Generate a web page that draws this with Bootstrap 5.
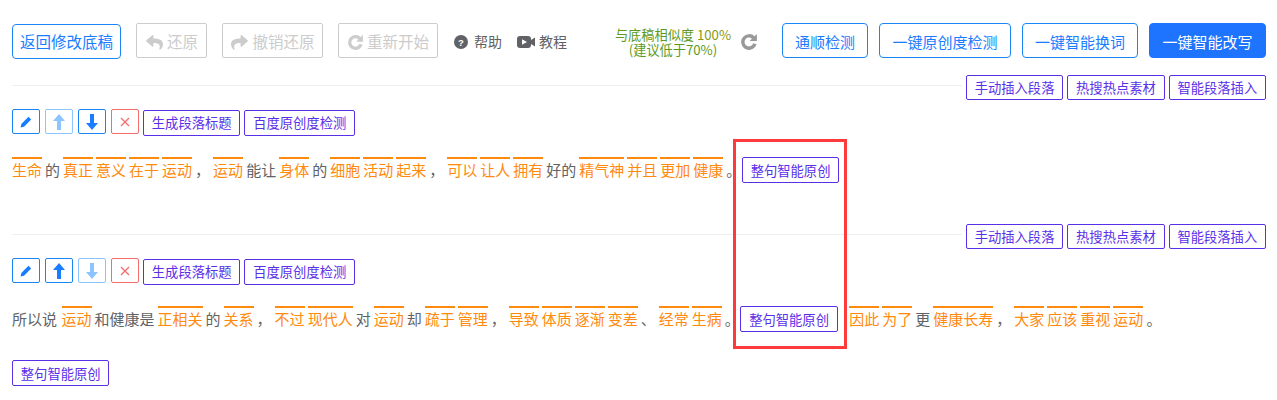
<!DOCTYPE html>
<html lang="zh-CN">
<head>
    <meta charset="UTF-8">
    <title>智能改写</title>
    <link href="https://cdn.jsdelivr.net/npm/bootstrap@5.3.0/dist/css/bootstrap.min.css" rel="stylesheet">
    <style>
        body {
            background: #fff;
            color: #606266;
            font-family: "Noto Sans CJK SC", "Liberation Sans", sans-serif;
            overflow: hidden;
        }
        .page-wrap {
            position: relative;
            height: 400px;
            padding: 23px 11px 0 12px;
        }
        .top-bar { height: 35px; }
        .btn-main {
            height: 35px;
            padding: 1px 0 0;
            font-size: 15px;
            line-height: 1;
            border-radius: 4px;
            white-space: nowrap;
            background: #fff;
            display: inline-flex;
            align-items: center;
            justify-content: center;
        }
        .btn-blue { color: #1a7dff; border: 1px solid #1a86f5; }
        .btn-blue:hover { color: #1a7dff; background: #fff; border-color: #1a86f5; }
        .btn-fill, .btn-fill:hover { color: #fff; background: #1f74ff; border: 1px solid #1f74ff; }
        .btn-off, .btn-off:disabled {
            color: #ccc;
            border: 1px solid #ccc;
            opacity: 1;
            border-radius: 2px;
            gap: 3px;
            font-size: 15.5px;
            margin-left: 15px;
            padding-top: 3px;
        }
        .btn-off svg { fill: #ccc; }
        .btn-back { width: 109px; font-size: 15.5px; margin-top: 2px; }
        .w-undo { width: 71px; }
        .w-redo { width: 101px; }
        .w-reset { width: 100px; }
        .w-fluent { width: 86px; }
        .w-origin { width: 132px; margin-left: 11px; }
        .w-swap { width: 116px; margin-left: 11px; }
        .w-rewrite { width: 117px; margin-left: 11px; }
        .help-link { font-size: 14px; color: #606266; gap: 6px; margin: 2px 0 0 16px; }
        .help-link.second { gap: 4px; margin-left: 15px; }
        .help-link svg { fill: #606266; }
        .similar-box {
            width: 118px;
            margin-top: 2px;
            font-size: 13.2px;
            line-height: 15px;
            color: #5c9a1e;
            text-align: center;
            white-space: nowrap;
        }
        .similar-box b { font-weight: 400; color: #8a9a10; }
        .refresh-icon { margin-top: 2px; }
        .btn-purple {
            height: 26px;
            padding: 0 7.8px;
            font-size: 13.3px;
            line-height: 1;
            color: #5a2fe8;
            background: #fff;
            border: 1px solid #5a2fe8;
            border-radius: 2px;
            white-space: nowrap;
            display: inline-flex;
            align-items: center;
        }
        .btn-purple:hover { color: #5a2fe8; background: #fff; border-color: #5a2fe8; }
        .btn-tiny {
            width: 28px;
            height: 25px;
            padding: 0;
            margin-right: 1px;
            background: #fff;
            border: 1px solid #1a86f5;
            border-radius: 2px;
            display: inline-flex;
            align-items: center;
            justify-content: center;
        }
        .btn-tiny:hover { background: #fff; border-color: #1a86f5; }
        .btn-tiny svg { fill: #1a7dff; }
        .btn-tiny.faded, .btn-tiny.faded:hover { border-color: #8cc5ff; }
        .btn-tiny.faded svg { fill: #8cc5ff; }
        .btn-tiny.del, .btn-tiny.del:hover { border-color: #f56c6c; margin-right: 0; }
        .btn-tiny.del svg { stroke: #f56c6c; fill: none; }
        .insert-row { height: 25px; margin-top: 17px; }
        .insert-row.next { margin-top: 0; }
        .insert-row .btn-purple { height: 25px; }
        .divide-line { margin-top: 10px; height: 1px; background: #eee; }
        .tool-row { margin-top: 9px; height: 26px; gap: 4px; }
        .tool-row .btn-purple { margin-top: 1px; }
        .para-text {
            font-size: 15px;
            line-height: 54px;
            height: 54px;
            margin: 8px 0 27px;
            white-space: nowrap;
        }
        .para-text.two-line { height: 108px; margin-bottom: 0; }
        .hl, .pl { margin: 0 1.5px; }
        .hl {
            color: #ff8a0d;
            border-top: 2px solid #ff8a0d;
        }
        .hl.lead-word, .pl.lead-word { margin-left: 0; }
        .pl.lead-word { margin-right: 3px; }
        .para-text .btn-purple { vertical-align: middle; margin: -3px 10px 0 -1px; }
        .para-text .btn-purple.line-start { margin-left: 0; }
        .red-frame {
            position: absolute;
            left: 733px;
            top: 139px;
            width: 114px;
            height: 210px;
            border: 3px solid #fd3a3c;
            pointer-events: none;
        }
    </style>
</head>
<body>

<div class="page-wrap">
    <div class="top-bar d-flex align-items-center">
        <button type="button" class="btn btn-main btn-blue btn-back">返回修改底稿</button>
        <button type="button" class="btn btn-main btn-off w-undo" disabled>
            <svg width="19" height="17" viewBox="0 0 512 512"><path d="M11 187 187 35c15-13 37-2 37 18v80c161 2 288 34 288 186 0 62-40 122-83 154-14 10-33-2-28-18 45-145-22-184-177-186v91c0 20-21 31-37 18L11 225c-11-10-11-28 0-38z"/></svg>还原
        </button>
        <button type="button" class="btn btn-main btn-off w-redo" disabled>
            <svg width="19" height="17" viewBox="0 0 512 512"><g transform="matrix(-1 0 0 1 512 0)"><path d="M11 187 187 35c15-13 37-2 37 18v80c161 2 288 34 288 186 0 62-40 122-83 154-14 10-33-2-28-18 45-145-22-184-177-186v91c0 20-21 31-37 18L11 225c-11-10-11-28 0-38z"/></g></svg>撤销还原
        </button>
        <button type="button" class="btn btn-main btn-off w-reset" disabled>
            <svg width="17" height="17" viewBox="0 0 16 16"><path d="M8 1a7 7 0 1 0 6.700 9.100l-3-1A3.900 3.900 0 1 1 10.600 5.100L8.600 7.200H15V.8l-2 2A7 7 0 0 0 8 1z"/></svg>重新开始
        </button>
        <span class="help-link d-inline-flex align-items-center">
            <svg width="14" height="14" viewBox="0 0 14 14"><circle cx="7" cy="7" r="7"/><text x="7" y="10.500" font-size="9.500" font-weight="700" text-anchor="middle" fill="#fff" font-family="Liberation Sans">?</text></svg>帮助
        </span>
        <span class="help-link second d-inline-flex align-items-center">
            <svg width="18" height="14" viewBox="0 0 18 14"><rect x="0" y="1" width="14" height="12" rx="3"/><path d="M14 5l4-2.500v9L14 9z"/><path d="M5 4.200v5.600L10 7z" fill="#fff"/></svg>教程
        </span>
        <div class="similar-box ms-auto">与底稿相似度 <b>100%</b><br>(建议低于70%)</div>
        <svg class="refresh-icon ms-2" width="18" height="18" viewBox="0 0 16 16" fill="#999"><path d="M8 1a7 7 0 1 0 6.700 9.100l-3-1A3.900 3.900 0 1 1 10.600 5.100L8.600 7.200H15V.8l-2 2A7 7 0 0 0 8 1z"/></svg>
        <button type="button" class="btn btn-main btn-blue w-fluent ms-4">通顺检测</button>
        <button type="button" class="btn btn-main btn-blue w-origin">一键原创度检测</button>
        <button type="button" class="btn btn-main btn-blue w-swap">一键智能换词</button>
        <button type="button" class="btn btn-main btn-fill w-rewrite">一键智能改写</button>
    </div>

    <div class="insert-row d-flex">
        <div class="divide-line flex-grow-1"></div>
        <div class="d-flex gap-1 ms-1">
            <button type="button" class="btn btn-purple">手动插入段落</button>
            <button type="button" class="btn btn-purple">热搜热点素材</button>
            <button type="button" class="btn btn-purple">智能段落插入</button>
        </div>
    </div>
    <div class="tool-row d-flex align-items-start">
        <button type="button" class="btn btn-tiny"><svg width="12" height="12" viewBox="0 0 12 12"><path d="M8.500.8l2.700 2.700-7.200 7.200L.6 11.400l.7-3.400z"/></svg></button>
        <button type="button" class="btn btn-tiny faded"><svg width="12" height="16" viewBox="0 0 12 16"><path d="M6 0l6 7H8v9H4V7H0z"/></svg></button>
        <button type="button" class="btn btn-tiny"><svg width="12" height="16" viewBox="0 0 12 16"><path d="M6 16l6-7H8V0H4v9H0z"/></svg></button>
        <button type="button" class="btn btn-tiny del"><svg width="10" height="10" viewBox="0 0 10 10" stroke-width="1.300"><path d="M1 1l8 8M9 1l-8 8"/></svg></button>
        <button type="button" class="btn btn-purple">生成段落标题</button>
        <button type="button" class="btn btn-purple">百度原创度检测</button>
    </div>
    <p class="para-text"><span class="hl lead-word">生命</span><span class="pl">的</span><span class="hl">真正</span><span class="hl">意义</span><span class="hl">在于</span><span class="hl">运动</span><span class="pl">，</span><span class="hl">运动</span><span class="pl">能让</span><span class="hl">身体</span><span class="pl">的</span><span class="hl">细胞</span><span class="hl">活动</span><span class="hl">起来</span><span class="pl">，</span><span class="hl">可以</span><span class="hl">让人</span><span class="hl">拥有</span><span class="pl">好的</span><span class="hl">精气神</span><span class="hl">并且</span><span class="hl">更加</span><span class="hl">健康</span><span class="pl">。</span><button type="button" class="btn btn-purple">整句智能原创</button></p>

    <div class="insert-row next d-flex">
        <div class="divide-line flex-grow-1"></div>
        <div class="d-flex gap-1 ms-1">
            <button type="button" class="btn btn-purple">手动插入段落</button>
            <button type="button" class="btn btn-purple">热搜热点素材</button>
            <button type="button" class="btn btn-purple">智能段落插入</button>
        </div>
    </div>
    <div class="tool-row d-flex align-items-start">
        <button type="button" class="btn btn-tiny"><svg width="12" height="12" viewBox="0 0 12 12"><path d="M8.500.8l2.700 2.700-7.200 7.200L.6 11.400l.7-3.400z"/></svg></button>
        <button type="button" class="btn btn-tiny"><svg width="12" height="16" viewBox="0 0 12 16"><path d="M6 0l6 7H8v9H4V7H0z"/></svg></button>
        <button type="button" class="btn btn-tiny faded"><svg width="12" height="16" viewBox="0 0 12 16"><path d="M6 16l6-7H8V0H4v9H0z"/></svg></button>
        <button type="button" class="btn btn-tiny del"><svg width="10" height="10" viewBox="0 0 10 10" stroke-width="1.300"><path d="M1 1l8 8M9 1l-8 8"/></svg></button>
        <button type="button" class="btn btn-purple">生成段落标题</button>
        <button type="button" class="btn btn-purple">百度原创度检测</button>
    </div>
    <p class="para-text two-line"><span class="pl lead-word">所以说</span><span class="hl">运动</span><span class="pl">和健康是</span><span class="hl">正相关</span><span class="pl">的</span><span class="hl">关系</span><span class="pl">，</span><span class="hl">不过</span><span class="hl">现代人</span><span class="pl">对</span><span class="hl">运动</span><span class="pl">却</span><span class="hl">疏于</span><span class="hl">管理</span><span class="pl">，</span><span class="hl">导致</span><span class="hl">体质</span><span class="hl">逐渐</span><span class="hl">变差</span><span class="pl">、</span><span class="hl">经常</span><span class="hl">生病</span><span class="pl">。</span><button type="button" class="btn btn-purple">整句智能原创</button><span class="hl">因此</span><span class="hl">为了</span><span class="pl">更</span><span class="hl">健康长寿</span><span class="pl">，</span><span class="hl">大家</span><span class="hl">应该</span><span class="hl">重视</span><span class="hl">运动</span><span class="pl">。</span><br><button type="button" class="btn btn-purple line-start">整句智能原创</button></p>

    <div class="red-frame"></div>
</div>

</body>
</html>
